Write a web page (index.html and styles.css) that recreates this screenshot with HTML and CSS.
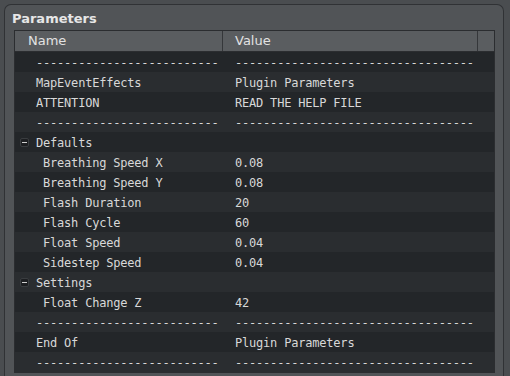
FILE: index.html
```html
<!DOCTYPE html>
<html lang="en">
<head>
    <meta charset="UTF-8">
    <title>Parameters</title>
    <link rel="stylesheet" href="styles.css">
</head>
<body>
    <div class="group">
        <div class="group-title">Parameters</div>

        <div class="table">
            <div class="header">
                <div class="head-cell name-head">Name</div>
                <div class="head-cell value-head">Value</div>
                <div class="head-corner"></div>
            </div>

            <div class="rows">
                <div class="row"><span class="name top">--------------------------</span><span class="value">----------------------------------</span></div>
                <div class="row"><span class="name top">MapEventEffects</span><span class="value">Plugin Parameters</span></div>
                <div class="row"><span class="name top">ATTENTION</span><span class="value">READ THE HELP FILE</span></div>
                <div class="row"><span class="name top">--------------------------</span><span class="value">----------------------------------</span></div>
                <div class="row"><span class="name branch"><i class="toggle"></i>Defaults</span><span class="value"></span></div>
                <div class="row"><span class="name child">Breathing Speed X</span><span class="value">0.08</span></div>
                <div class="row"><span class="name child">Breathing Speed Y</span><span class="value">0.08</span></div>
                <div class="row"><span class="name child">Flash Duration</span><span class="value">20</span></div>
                <div class="row"><span class="name child">Flash Cycle</span><span class="value">60</span></div>
                <div class="row"><span class="name child">Float Speed</span><span class="value">0.04</span></div>
                <div class="row"><span class="name child">Sidestep Speed</span><span class="value">0.04</span></div>
                <div class="row"><span class="name branch"><i class="toggle"></i>Settings</span><span class="value"></span></div>
                <div class="row"><span class="name child">Float Change Z</span><span class="value">42</span></div>
                <div class="row"><span class="name top">--------------------------</span><span class="value">----------------------------------</span></div>
                <div class="row"><span class="name top">End Of</span><span class="value">Plugin Parameters</span></div>
                <div class="row"><span class="name top">--------------------------</span><span class="value">----------------------------------</span></div>
            </div>
        </div>
    </div>
</body>
</html>
```

FILE: styles.css
```css
* {
    margin: 0;
    padding: 0;
    box-sizing: border-box;
}

body {
    width: 510px;
    height: 376px;
    overflow: hidden;
    background: #4a4d50;
    font-family: 'DejaVu Sans', sans-serif;
    color: #dedede;
}

.group {
    margin: 4px 0 0 4px;
    width: 500px;
    height: 372px;
    overflow: hidden;
    border: 1px solid #303235;
    border-bottom: none;
    border-radius: 7px 7px 0 0;
    background: #515457;
    padding: 0 8px 0 9px;
}

.group-title {
    height: 25px;
    margin-left: -4px;
    padding: 6px 0 0 2px;
    font-size: 13px;
    font-weight: bold;
    line-height: 16px;
    color: #e6e6e6;
}

.table {
    border: 1px solid #2b2d30;
    background: #25282b;
}

.header {
    display: flex;
    height: 21px;
    background: #5a5d60;
    border-bottom: 1px solid #2b2d30;
}

.head-cell {
    font-size: 13px;
    line-height: 19px;
    color: #e2e2e2;
}

.name-head {
    width: 208px;
    padding-left: 13px;
    border-right: 1px solid #35373a;
}

.value-head {
    width: 255px;
    padding-left: 12px;
    border-right: 1px solid #35373a;
}

.head-corner {
    flex: 1;
}

.row {
    display: flex;
    height: 20px;
    padding-top: 1px;
    font-family: 'DejaVu Sans Mono', monospace;
    font-size: 12px;
    letter-spacing: -0.2px;
    line-height: 20px;
    color: #d8d8d8;
    white-space: pre;
    background: #232629;
}

.row:nth-child(even) {
    background: #2a2d30;
}

.name {
    width: 208px;
    height: 19px;
    display: flex;
    align-items: center;
}

.name.top {
    padding-left: 21px;
}

.name.child {
    padding-left: 28px;
}

.name.branch {
    padding-left: 5px;
}

.toggle {
    width: 9px;
    height: 9px;
    margin-right: 7px;
    border: 1px solid #3a3d40;
    border-radius: 2px;
    background: #1d1f22;
    display: flex;
    align-items: center;
    justify-content: center;
}

.toggle::before {
    content: '';
    width: 5px;
    height: 1px;
    background: #cfcfcf;
}

.value {
    flex: 1;
    padding-left: 12px;
}
```
